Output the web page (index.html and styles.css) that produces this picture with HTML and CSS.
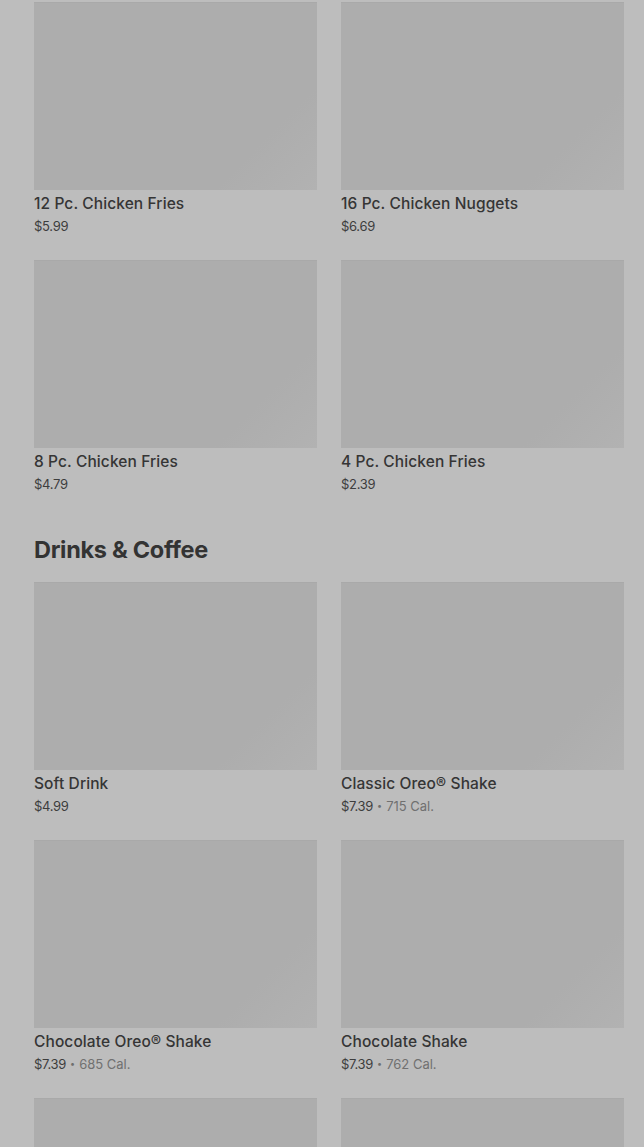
FILE: index.html
```html
<!DOCTYPE html>
<html>
<head>
<meta charset="utf-8">
<link rel="stylesheet" href="styles.css">
</head>
<body>
<main class="page">
  <section class="grid">
    <div class="card"><div class="img"></div><div class="name">12 Pc. Chicken Fries</div><div class="meta"><span class="price">$5.99</span></div></div>
    <div class="card"><div class="img"></div><div class="name">16 Pc. Chicken Nuggets</div><div class="meta"><span class="price">$6.69</span></div></div>
    <div class="card"><div class="img"></div><div class="name">8 Pc. Chicken Fries</div><div class="meta"><span class="price">$4.79</span></div></div>
    <div class="card"><div class="img"></div><div class="name">4 Pc. Chicken Fries</div><div class="meta"><span class="price">$2.39</span></div></div>
  </section>
  <h2 class="heading">Drinks &amp; Coffee</h2>
  <section class="grid">
    <div class="card"><div class="img"></div><div class="name">Soft Drink</div><div class="meta"><span class="price">$4.99</span></div></div>
    <div class="card"><div class="img"></div><div class="name">Classic Oreo® Shake</div><div class="meta"><span class="price">$7.39</span><span class="dot">•</span><span class="cal">715 Cal.</span></div></div>
    <div class="card"><div class="img"></div><div class="name">Chocolate Oreo® Shake</div><div class="meta"><span class="price">$7.39</span><span class="dot">•</span><span class="cal">685 Cal.</span></div></div>
    <div class="card"><div class="img"></div><div class="name">Chocolate Shake</div><div class="meta"><span class="price">$7.39</span><span class="dot">•</span><span class="cal">762 Cal.</span></div></div>
    <div class="card"><div class="img"></div><div class="name">&nbsp;</div><div class="meta">&nbsp;</div></div>
    <div class="card"><div class="img"></div><div class="name">&nbsp;</div><div class="meta">&nbsp;</div></div>
  </section>
</main>
</body>
</html>
```
FILE: styles.css
```css
html, body {
  margin: 0;
  padding: 0;
  background: #bdbdbd;
  overflow: hidden;
}
body {
  font-family: Inter, "Noto Sans", sans-serif;
  color: #353535;
}
.page {
  padding: 2px 20px 0 34px;
}
.grid {
  display: grid;
  grid-template-columns: 283px 283px;
  column-gap: 24px;
  row-gap: 24px;
}
.card {
  display: flex;
  flex-direction: column;
}
.img {
  height: 188px;
  background: linear-gradient(135deg, #adadad 0%, #adadad 78%, #b2b2b2 100%);
  border-top: 1px solid #a9a9a9;
  box-sizing: border-box;
}
.name {
  margin-top: 2px;
  font-size: 15.5px;
  font-weight: 500;
  line-height: 24px;
  letter-spacing: 0.1px;
  color: #353535;
  white-space: nowrap;
}
.meta {
  font-size: 13px;
  line-height: 20px;
  display: flex;
  align-items: center;
  gap: 4px;
}
.price {
  color: #3d3d3d;
  letter-spacing: -0.3px;
}
.dot {
  color: #6e6e6e;
  font-size: 9px;
}
.cal {
  color: #707070;
}
.heading {
  margin: 42px 0 18px;
  font-size: 23.5px;
  line-height: 28px;
  font-weight: 700;
  letter-spacing: -0.3px;
  color: #333;
}
```
